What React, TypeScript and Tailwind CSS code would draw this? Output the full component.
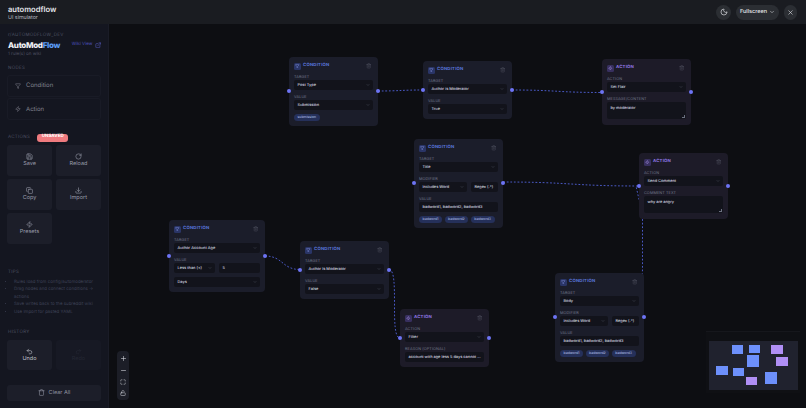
import React from "react";
import { Filter, Zap, Trash2, ChevronDown, Save, RotateCw, Copy, Download, Undo2, Redo2, Trash, Moon, X, Plus, Minus, Maximize, LockOpen, ExternalLink } from "lucide-react";

type F =
  | { kind: "select"; label?: string; value: string }
  | { kind: "row"; label?: string; a: string; b: string; muted?: boolean }
  | { kind: "input"; label?: string; value: string }
  | { kind: "area"; label: string; value: string }
  | { kind: "chips"; items: string[] };

type N = { type: "c" | "a"; x: number; y: number; w?: number; fields: F[] };

const nodes: N[] = [
  { type: "c", x: 289, y: 57, fields: [{ kind: "select", label: "TARGET", value: "Post Type" }, { kind: "select", label: "VALUE", value: "Submission" }, { kind: "chips", items: ["submission"] }] },
  { type: "c", x: 423, y: 61, fields: [{ kind: "select", label: "TARGET", value: "Author is Moderator" }, { kind: "select", label: "VALUE", value: "True" }] },
  { type: "a", x: 602, y: 59, fields: [{ kind: "select", label: "ACTION", value: "Set Flair" }, { kind: "area", label: "MESSAGE/CONTENT", value: "by moderator" }] },
  { type: "c", x: 414, y: 139, fields: [{ kind: "select", label: "TARGET", value: "Title" }, { kind: "row", label: "MODIFIER", a: "Includes Word", b: "Regex (.*)", muted: true }, { kind: "input", label: "VALUE", value: "badword1, badword2, badword3" }, { kind: "chips", items: ["badword1", "badword2", "badword3"] }] },
  { type: "a", x: 639, y: 153, fields: [{ kind: "select", label: "ACTION", value: "Send Comment" }, { kind: "area", label: "COMMENT TEXT", value: "why are angry" }] },
  { type: "c", x: 169, y: 220, w: 96, fields: [{ kind: "select", label: "TARGET", value: "Author Account Age" }, { kind: "row", label: "VALUE", a: "Less than (<)", b: "5" }, { kind: "select", value: "Days" }] },
  { type: "c", x: 300, y: 241, fields: [{ kind: "select", label: "TARGET", value: "Author Is Moderator" }, { kind: "select", label: "VALUE", value: "False" }] },
  { type: "a", x: 400, y: 309, fields: [{ kind: "select", label: "ACTION", value: "Filter" }, { kind: "input", label: "REASON (OPTIONAL)", value: "account with age less 5 days cannot ..." }] },
  { type: "c", x: 555, y: 273, fields: [{ kind: "select", label: "TARGET", value: "Body" }, { kind: "row", label: "MODIFIER", a: "Includes Word", b: "Regex (.*)", muted: true }, { kind: "input", label: "VALUE", value: "badword1, badword2, badword3" }, { kind: "chips", items: ["badword1", "badword2", "badword3"] }] },
];

const edges = [
  "M378 91 C 400 91, 401 90, 423 90",
  "M512 90 C 557 90, 557 92.500, 602 92.500",
  "M503 182 C 571 182, 571 186, 639 186",
  "M640 300 L 642.500 270 L 642.500 215 L 636 186",
  "M265 256 C 283 256, 282 269.500, 300 269.500",
  "M389 269.500 C 400 269.500, 389 338, 400 338",
];

const mini = [
  ["b", 23, 4, 11.500, 8.700], ["b", 40, 4, 11.500, 8], ["p", 62.500, 4, 11.500, 8.700],
  ["b", 38.500, 14.300, 11.700, 11.400], ["p", 67.500, 16, 11.500, 8.700], ["b", 7.500, 24.700, 12.400, 9],
  ["b", 24.500, 27.300, 11.400, 7.700], ["p", 37.300, 36, 11, 7.700], ["b", 56.500, 31.300, 11.700, 11.700],
] as const;

function Caret() {
  return <ChevronDown className="w-[4px] h-[4px] text-[#6b7080] shrink-0" strokeWidth={2} />;
}

function Box({ children, cls = "" }: { children: React.ReactNode; cls?: string }) {
  return <div className={`h-[10px] bg-[#12131b] rounded-[2px] px-[3.500px] flex items-center justify-between text-[#d6d8e0] text-[3.900px] font-medium leading-none whitespace-nowrap ${cls}`}>{children}</div>;
}

function Label({ t }: { t: string }) {
  return <div className="text-[3.800px] leading-[5px] tracking-[0.1px] text-[#73788a] mb-[1.500px] mt-[3.500px] whitespace-nowrap">{t}</div>;
}

function Field({ f }: { f: F }) {
  if (f.kind === "select")
    return <div>{f.label ? <Label t={f.label} /> : <div className="h-[4px]" />}<Box><span>{f.value}</span><Caret /></Box></div>;
  if (f.kind === "row")
    return (
      <div>
        <Label t={f.label ?? ""} />
        <div className="flex gap-[4px]">
          <Box cls="flex-1"><span>{f.a}</span><Caret /></Box>
          <Box cls={f.muted ? "w-[27px] text-[#565a68]" : "flex-1"}><span>{f.b}</span></Box>
        </div>
      </div>
    );
  if (f.kind === "input")
    return <div><Label t={f.label ?? ""} /><Box><span>{f.value}</span></Box></div>;
  if (f.kind === "area")
    return (
      <div className="mb-[1px]">
        <Label t={f.label} />
        <div className="relative h-[17px] bg-[#12131b] rounded-[2px] px-[3.500px] pt-[3.500px] text-[#d6d8e0] text-[3.900px] font-medium leading-none">
          {f.value}
          <div className="absolute right-[1px] bottom-[1px] w-[3px] h-[3px] border-b border-r border-[#6b7080]" />
        </div>
      </div>
    );
  return (
    <div className="flex gap-[2.500px] mt-[3.500px]">
      {f.items.map((c) => (
        <span key={c} className="h-[7px] px-[3.500px] rounded-full bg-[#25305a] text-[#b8c4ee] text-[3.500px] leading-[7px] whitespace-nowrap">{c}</span>
      ))}
    </div>
  );
}

function Node({ n }: { n: N }) {
  const isC = n.type === "c";
  return (
    <div
      className={`absolute rounded-[4px] px-[5px] pt-[5px] pb-[5px] ${isC ? "bg-[#1b1d2a]" : "bg-[#1d1b28]"} ${n.w ? "" : "w-[89px]"}`}
      style={{ left: n.x, top: n.y, width: n.w }}
    >
      <div className="flex items-center h-[8px]">
        <div className={`w-[7px] h-[7px] rounded-[1.500px] flex items-center justify-center ${isC ? "bg-[#2a3566]" : "bg-[#38305f]"}`}>
          {isC ? <Filter className="w-[4.500px] h-[4.500px] text-[#93a5f5]" strokeWidth={2} /> : <Zap className="w-[4.500px] h-[4.500px] text-[#b39df5]" strokeWidth={2} />}
        </div>
        <span className={`ml-[2px] text-[4.300px] font-bold tracking-[0.2px] ${isC ? "text-[#5a76dc]" : "text-[#9078e6]"}`}>{isC ? "CONDITION" : "ACTION"}</span>
        <Trash2 className="ml-auto mr-[2px] w-[5.500px] h-[5.500px] text-[#5d6170]" strokeWidth={1.500} />
      </div>
      {n.fields.map((f, i) => <Field key={i} f={f} />)}
      <div className="absolute left-[-2px] top-1/2 -translate-y-1/2 w-[4px] h-[4px] rounded-full bg-[#6d74f5]" />
      <div className="absolute right-[-2px] top-1/2 -translate-y-1/2 w-[4px] h-[4px] rounded-full bg-[#6d74f5]" />
    </div>
  );
}

function SectionLabel({ children, cls = "" }: { children: React.ReactNode; cls?: string }) {
  return <div className={`text-[4.500px] leading-[5.200px] tracking-[0.3px] text-[#4d5161] pl-[1px] whitespace-nowrap ${cls}`}>{children}</div>;
}

function NodeCard({ icon, label }: { icon: React.ReactNode; label: string }) {
  return (
    <div className="h-[22px] rounded-[3px] border border-[#191b26] flex items-center pl-[7px] gap-[5px] text-[#80838f] text-[6px]">
      {icon}
      <span>{label}</span>
    </div>
  );
}

function Btn({ icon, label, cls = "text-[#9a9dab]" }: { icon: React.ReactNode; label: string; cls?: string }) {
  return (
    <div className={`h-[30.500px] rounded-[3px] bg-[#1c1e29] flex flex-col items-center justify-center gap-[2px] text-[5.500px] leading-none ${cls}`}>
      {icon}
      <span>{label}</span>
    </div>
  );
}

const ic = "w-[7px] h-[7px]";

export default function App() {
  return (
    <div className="relative w-[806px] h-[408px] flex flex-col overflow-hidden bg-[#0d0e12] [text-rendering:geometricPrecision]" style={{ fontFamily: "Inter, 'Noto Sans', sans-serif" }}>
      <header className="h-[24px] shrink-0 bg-[#1a1c21] flex items-center pl-[8px] pr-[9px]">
        <div className="pt-[3px]">
          <div className="text-[7.600px] leading-[10px] font-semibold text-[#e4e6ea]">automodflow</div>
          <div className="text-[5.300px] leading-[7px] text-[#b9bcc4]">UI simulator</div>
        </div>
        <div className="ml-auto flex items-center gap-[5px]">
          <div className="w-[15px] h-[15px] rounded-full bg-[#2b2e33] flex items-center justify-center"><Moon className="w-[8px] h-[8px] text-[#e4e6ea]" /></div>
          <div className="w-[43px] h-[15px] rounded-full bg-[#2b2e33] flex items-center justify-center gap-[2px] text-[#e4e6ea] text-[5.500px] font-medium">Fullscreen<ChevronDown className="w-[6px] h-[6px]" /></div>
          <div className="w-[13px] h-[15px] rounded-full bg-[#2b2e33] flex items-center justify-center"><X className="w-[7px] h-[7px] text-[#e4e6ea]" /></div>
        </div>
      </header>
      <div className="flex-1 flex min-h-0">
        <aside className="w-[109px] shrink-0 bg-[#141620] border-r border-[#1a1c27] px-[7px] pt-[9px]">
          <SectionLabel cls="text-[#3f4352]">r/AUTOMODFLOW_DEV</SectionLabel>
          <div className="flex items-center mt-[2px] h-[10px] pl-[1px]">
            <span className="text-[8px] tracking-[-0.3px] font-extrabold text-[#f0f1f5] leading-none whitespace-nowrap">AutoMod<span className="text-[#5b9cf6]">Flow</span></span>
            <span className="ml-auto flex items-center gap-[2px] text-[4.500px] text-[#4b50b8] whitespace-nowrap">Wiki View<ExternalLink className="w-[6.500px] h-[6.500px] text-[#5a5fc8]" /></span>
          </div>
          <div className="text-[4.500px] leading-[5px] text-[#4d5161] mt-[1.500px] pl-[1px]">1 rule(s) on wiki</div>
          <SectionLabel cls="mt-[9px]">NODES</SectionLabel>
          <div className="flex flex-col gap-[1.500px] mt-[4px]">
            <NodeCard icon={<Filter className="w-[6px] h-[6px]" />} label="Condition" />
            <NodeCard icon={<Zap className="w-[6px] h-[6px]" />} label="Action" />
          </div>
          <div className="flex items-center gap-[7px] mt-[12.800px] h-[9px]">
            <SectionLabel>ACTIONS</SectionLabel>
            <span className="h-[8px] w-[31px] rounded-[3px] bg-[#ef7b7f] flex items-center justify-center text-[4.500px] font-bold text-white">UNSAVED</span>
          </div>
          <div className="grid grid-cols-2 gap-x-[4px] gap-y-[3.500px] mt-[3px]">
            <Btn icon={<Save className={ic} />} label="Save" />
            <Btn icon={<RotateCw className={ic} />} label="Reload" />
            <Btn icon={<Copy className={ic} />} label="Copy" />
            <Btn icon={<Download className={ic} />} label="Import" />
            <Btn icon={<Zap className={ic} />} label="Presets" />
          </div>
          <SectionLabel cls="mt-[26px]">TIPS</SectionLabel>
          <ul className="mt-[3.600px] pl-[7px] list-disc text-[4.400px] leading-[7.500px] text-[#3c4054] marker:text-[#3c4054]">
            <li>Rules load from config/automoderator</li>
            <li>Drag nodes and connect conditions → actions</li>
            <li>Save writes back to the subreddit wiki</li>
            <li>Use Import for pasted YAML</li>
          </ul>
          <SectionLabel cls="mt-[14.400px]">HISTORY</SectionLabel>
          <div className="grid grid-cols-2 gap-x-[4px] mt-[4.200px]">
            <Btn icon={<Undo2 className={ic} />} label="Undo" cls="text-[#c0c2cc]" />
            <Btn icon={<Redo2 className={ic} />} label="Redo" cls="!bg-[#171924] text-[#252834]" />
          </div>
          <div className="mt-[14.700px] h-[16px] rounded-[3px] bg-[#1c1e29] flex items-center justify-center gap-[4px] text-[#8f92a0] text-[5.500px]">
            <Trash className="w-[7px] h-[7px]" />Clear All
          </div>
        </aside>
        <main className="relative flex-1 min-w-0">
          <div className="absolute left-[8px] bottom-[8px] w-[12px] h-[49px] rounded-[4px] bg-[#1c1e27] flex flex-col items-center justify-around py-[1px] text-[#d5d7de]">
            <Plus className="w-[7px] h-[7px]" />
            <Minus className="w-[7px] h-[7px]" />
            <Maximize className="w-[6px] h-[6px]" />
            <LockOpen className="w-[6px] h-[6px]" />
          </div>
          <div className="absolute right-[6px] bottom-[15px] w-[94px] h-[62px] bg-[#0f1014] border-t border-[#16171c] flex items-end justify-center pb-[3px]">
            <div className="relative w-[89px] h-[49px] bg-[#20222e]">
              {mini.map(([c, x, y, w, h], i) => (
                <div key={i} className={`absolute ${c === "b" ? "bg-[#6d90fb]" : "bg-[#b08ff5]"}`} style={{ left: x, top: y, width: w, height: h }} />
              ))}
            </div>
          </div>
        </main>
      </div>
      <svg className="absolute left-0 top-0" width="806" height="408" fill="none">
        {edges.map((d) => <path key={d} d={d} stroke="#5061d8" strokeWidth="0.9" strokeDasharray="1.800 1.800" />)}
      </svg>
      {nodes.map((n, i) => <Node key={i} n={n} />)}
    </div>
  );
}
